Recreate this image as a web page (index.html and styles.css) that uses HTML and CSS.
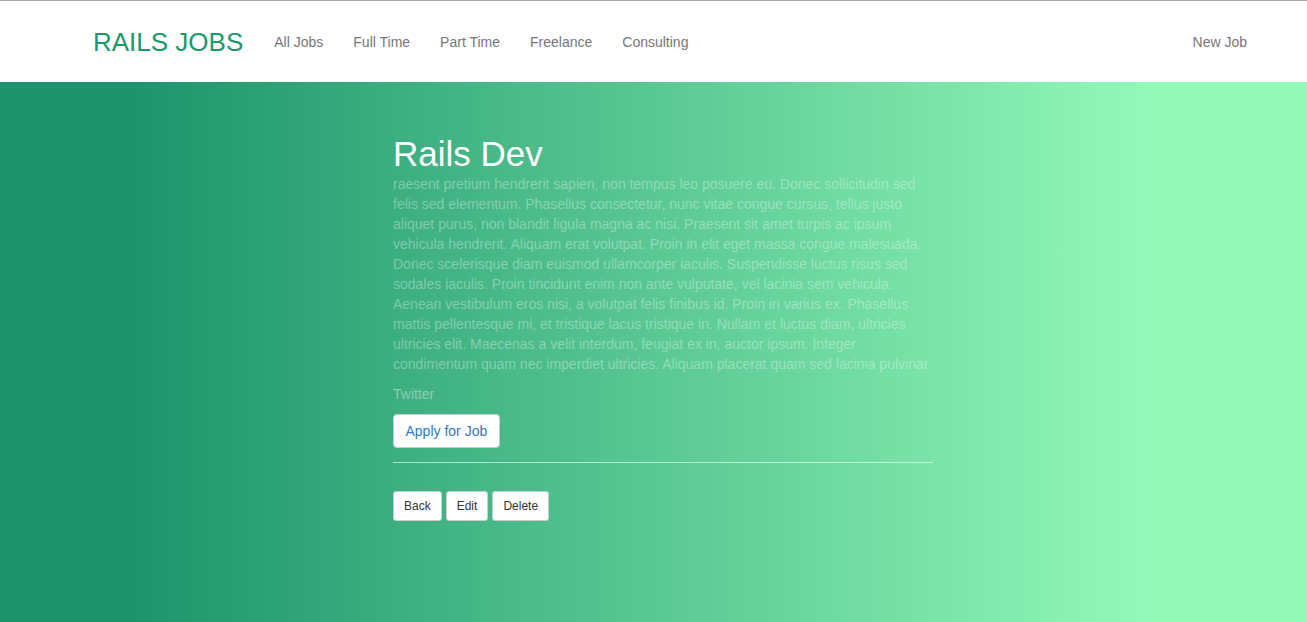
FILE: index.html
```html
<!DOCTYPE html>
<html>
<head>
<meta charset="utf-8">
<link rel="stylesheet" href="styles.css">
</head>
<body>
<header class="navbar">
  <div class="nav-left">
    <a class="brand" href="#">RAILS JOBS</a>
    <nav class="links">
      <a href="#">All Jobs</a>
      <a href="#">Full Time</a>
      <a href="#">Part Time</a>
      <a href="#">Freelance</a>
      <a href="#">Consulting</a>
    </nav>
  </div>
  <nav class="links">
    <a href="#">New Job</a>
  </nav>
</header>
<main class="hero">
  <section class="job">
    <h1 class="title">Rails Dev</h1>
    <p class="desc">raesent pretium hendrerit sapien, non tempus leo posuere eu. Donec sollicitudin sed felis sed elementum. Phasellus consectetur, nunc vitae congue cursus, tellus justo aliquet purus, non blandit ligula magna ac nisi. Praesent sit amet turpis ac ipsum vehicula hendrerit. Aliquam erat volutpat. Proin in elit eget massa congue malesuada. Donec scelerisque diam euismod ullamcorper iaculis. Suspendisse luctus risus sed sodales iaculis. Proin tincidunt enim non ante vulputate, vel lacinia sem vehicula. Aenean vestibulum eros nisi, a volutpat felis finibus id. Proin in varius ex. Phasellus mattis pellentesque mi, et tristique lacus tristique in. Nullam et luctus diam, ultricies ultricies elit. Maecenas a velit interdum, feugiat ex in, auctor ipsum. Integer condimentum quam nec imperdiet ultricies. Aliquam placerat quam sed lacinia pulvinar.</p>
    <p class="company">Twitter</p>
    <div class="apply-row"><a class="btn btn-apply" href="#">Apply for Job</a></div>
    <hr class="divider">
    <div class="actions">
      <a class="btn btn-sm" href="#">Back</a>
      <a class="btn btn-sm" href="#">Edit</a>
      <a class="btn btn-sm" href="#">Delete</a>
    </div>
  </section>
</main>
</body>
</html>
```
FILE: styles.css
```css
* { box-sizing: border-box; }
html, body { height: 100%; }
body {
  margin: 0;
  font-family: "Liberation Sans", Arial, sans-serif;
  font-size: 14px;
  line-height: 20px;
  color: #333;
  display: flex;
  flex-direction: column;
  border-top: 1px solid #a9a9a9;
}
a { text-decoration: none; }
.navbar {
  height: 81px;
  background: #fff;
  display: flex;
  align-items: center;
  justify-content: space-between;
  padding: 0 45px 0 93px;
  flex-shrink: 0;
}
.nav-left { display: flex; align-items: center; }
.brand {
  font-size: 26px;
  line-height: 30px;
  color: #1d976c;
  margin-right: 16px;
}
.links { display: flex; }
.links a {
  color: #777;
  padding: 0 15px;
  line-height: 20px;
  font-size: 14px;
}
.hero {
  flex: 1;
  background: linear-gradient(to right, #1d946c 10%, #93f9b9 88%);
  padding: 53px 0 40px 393px;
}
.job { width: 540px; }
.title {
  margin: 0;
  font-size: 35px;
  font-weight: 500;
  line-height: 1.1;
  color: #fff;
}
.desc {
  margin: 0 0 10px;
  color: rgba(255, 255, 255, 0.35);
}
.company {
  margin: 0 0 10px;
  color: rgba(255, 255, 255, 0.4);
}
.btn {
  display: inline-block;
  background: #fff;
  border: 1px solid #ccc;
  border-radius: 4px;
  color: #333;
}
.btn-apply {
  color: #337ab7;
  padding: 6px 11.5px;
  line-height: 20px;
  font-size: 14px;
}
.apply-row { display: flex; }
.divider {
  margin: 14px 0 28px;
  border: 0;
  border-top: 1px solid rgba(255, 255, 255, 0.6);
}
.actions { display: flex; gap: 4px; }
.btn-sm {
  padding: 5px 10px;
  font-size: 12px;
  line-height: 18px;
  border-radius: 3px;
}
```
